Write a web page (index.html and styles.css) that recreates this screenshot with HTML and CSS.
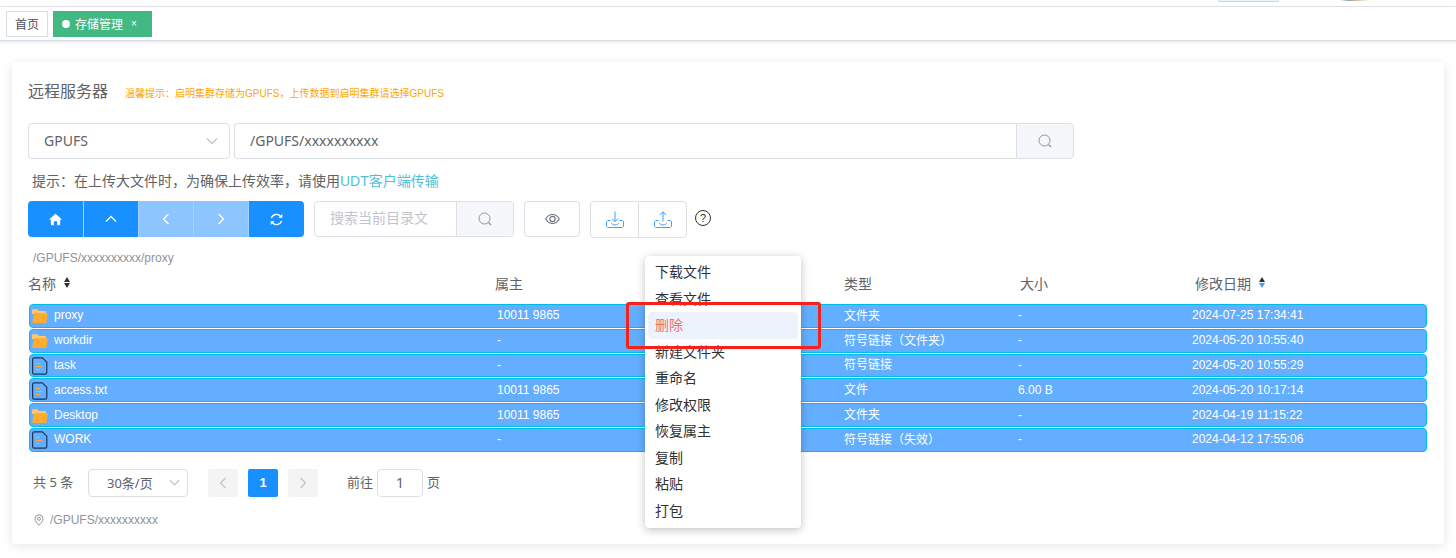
FILE: index.html
```html
<!DOCTYPE html>
<html lang="zh-CN">
<head>
<meta charset="utf-8">
<title>存储管理</title>
<link rel="stylesheet" href="styles.css">
</head>
<body>
<svg class="defs" width="0" height="0">
  <defs>
    <symbol id="folder" viewBox="0 0 16 16">
      <path fill="#ffc766" d="M0 2.2c0-.5.4-.9.9-.9h4.4l1.6 1.6h6.2c.5 0 .9.4.9.9V6H0z"/>
      <path fill="#ffab2e" d="M.2 14.6 1.9 6c.1-.5.4-.8.9-.8H15c.6 0 1 .5.9 1l-1.6 8c-.1.5-.5.8-1 .8H1c-.5 0-.9-.4-.8-.4z"/>
    </symbol>
    <symbol id="file" viewBox="0 0 16 18">
      <path fill="none" stroke="#1c3557" stroke-width="1.2" d="M2.2.8h8.2l4.4 4.4v10.4c0 .9-.7 1.6-1.6 1.6H2.2c-.9 0-1.6-.7-1.6-1.6V2.4C.6 1.500 1.300.8 2.200.8z"/>
      <path fill="none" stroke="#ffab2e" stroke-width="1.100" d="M4 6.500h4M4 9.500h6M4 12.500h4"/>
    </symbol>
    <symbol id="search" viewBox="0 0 14 14">
      <circle cx="6.500" cy="6.500" r="5.500" fill="none" stroke="currentColor" stroke-width="1"/>
      <path d="m10.500 10.500 2.500 2.500" fill="none" stroke="currentColor" stroke-width="1.200"/>
    </symbol>
    <symbol id="chev" viewBox="0 0 12 12">
      <path d="M1 8.500 6 3.500l5 5" fill="none" stroke="currentColor" stroke-width="1.300"/>
    </symbol>
    <symbol id="tray-down" viewBox="0 0 18 18">
      <path d="M9 .5v10M5.800 7.500 9 10.700l3.200-3.200" fill="none" stroke="currentColor" stroke-width="1"/>
      <path d="M4.500 9.500H2c-.8 0-1.500.7-1.500 1.500v4c0 .8.7 1.500 1.500 1.500h14c.8 0 1.500-.7 1.500-1.500v-4c0-.8-.7-1.500-1.500-1.500h-2.500M5 12.500c1 0 1.500 1.500 4 1.500s3-1.500 4-1.500" fill="none" stroke="currentColor" stroke-width="1"/>
    </symbol>
    <symbol id="tray-up" viewBox="0 0 18 18">
      <path d="M9 10.500V.8M5.800 4 9 .8 12.200 4" fill="none" stroke="currentColor" stroke-width="1"/>
      <path d="M4.500 9.500H2c-.8 0-1.500.7-1.500 1.500v4c0 .8.7 1.500 1.500 1.500h14c.8 0 1.500-.7 1.500-1.500v-4c0-.8-.7-1.500-1.500-1.500h-2.500M5 12.500c1 0 1.500 1.500 4 1.500s3-1.500 4-1.500" fill="none" stroke="currentColor" stroke-width="1"/>
    </symbol>
  </defs>
</svg>

<div class="topstrip">
  <span class="top-btn"></span>
  <span class="top-avatar"></span>
</div>

<nav class="tagsbar">
  <span class="tag">首页</span>
  <span class="tag tag-active"><i class="tag-dot"></i>存储管理<span class="tag-close">×</span></span>
</nav>

<main class="card">
  <div class="title-row">
    <span class="title">远程服务器</span>
    <span class="notice">温馨提示：启明集群存储为GPUFS，上传数据到启明集群请选择GPUFS</span>
  </div>

  <div class="path-row">
    <div class="select">GPUFS<svg class="sel-chev"><use href="#chev"/></svg></div>
    <div class="path-input">/GPUFS/xxxxxxxxxx</div>
    <div class="append"><svg class="ico-search"><use href="#search"/></svg></div>
  </div>

  <p class="tip">提示：在上传大文件时，为确保上传效率，请使用<span class="link">UDT客户端传输</span></p>

  <div class="toolbar">
    <div class="btn-group">
      <button class="nav-btn" type="button"><svg class="ico-home" viewBox="0 0 14 14"><path fill="#fff" d="M7 .8 13.400 6.400c.3.3.1.8-.3.8H12v5.300c0 .4-.3.700-.7.700H8.800V9.500c0-.3-.2-.5-.5-.5H5.700c-.3 0-.5.200-.5.500v3.700H2.700c-.4 0-.7-.3-.7-.7V7.200H.9c-.4 0-.6-.5-.3-.8z"/></svg></button>
      <button class="nav-btn" type="button"><svg class="ico-chev"><use href="#chev"/></svg></button>
      <button class="nav-btn nav-off" type="button"><svg class="ico-chev rot-left"><use href="#chev"/></svg></button>
      <button class="nav-btn nav-off" type="button"><svg class="ico-chev rot-right"><use href="#chev"/></svg></button>
      <button class="nav-btn" type="button"><svg class="ico-refresh" viewBox="0 0 14 14"><path d="M1.500 5.500A5.700 5.700 0 0 1 11.500 3.800M12.500 8.500A5.700 5.700 0 0 1 2.500 10.200" fill="none" stroke="#fff" stroke-width="1.500"/><path fill="#fff" d="M9 5.200h4.300V1zM5 8.800H.7V13z"/></svg></button>
    </div>
    <div class="search-box">
      <span class="search-ph">搜索当前目录文</span>
      <span class="search-btn"><svg class="ico-search"><use href="#search"/></svg></span>
    </div>
    <button class="eye-btn" type="button"><svg class="ico-eye" viewBox="0 0 16 12"><path d="M.8 6C2.500 2.800 5 1.200 8 1.200s5.500 1.600 7.200 4.800C13.500 9.200 11 10.800 8 10.800S2.500 9.200.8 6z" fill="none" stroke="#6b7280" stroke-width="1.200"/><circle cx="8" cy="6" r="2.800" fill="none" stroke="#6b7280" stroke-width="1.200"/></svg></button>
    <div class="transfer">
      <button class="tr-btn" type="button"><svg class="ico-tray"><use href="#tray-down"/></svg></button>
      <button class="tr-btn" type="button"><svg class="ico-tray"><use href="#tray-up"/></svg></button>
    </div>
    <span class="help">?</span>
  </div>

  <div class="crumb">/GPUFS/xxxxxxxxxx/proxy</div>

  <div class="thead">
    <span class="th-name">名称<span class="sort"><i class="up"></i><i class="down"></i></span></span>
    <span>属主</span>
    <span></span>
    <span>类型</span>
    <span>大小</span>
    <span class="th-date">修改日期<span class="sort"><i class="up"></i><i class="down on"></i></span></span>
  </div>

  <div class="tbody">
    <div class="row"><span class="name"><svg class="ic-folder"><use href="#folder"/></svg>proxy</span><span>10011 9865</span><span></span><span class="kind">文件夹</span><span>-</span><span>2024-07-25 17:34:41</span></div>
    <div class="row"><span class="name"><svg class="ic-folder"><use href="#folder"/></svg>workdir</span><span>-</span><span></span><span class="kind">符号链接（文件夹）</span><span>-</span><span>2024-05-20 10:55:40</span></div>
    <div class="row"><span class="name"><svg class="ic-file"><use href="#file"/></svg>task</span><span>-</span><span></span><span class="kind">符号链接</span><span>-</span><span>2024-05-20 10:55:29</span></div>
    <div class="row"><span class="name"><svg class="ic-file"><use href="#file"/></svg>access.txt</span><span>10011 9865</span><span></span><span class="kind">文件</span><span>6.00 B</span><span>2024-05-20 10:17:14</span></div>
    <div class="row"><span class="name"><svg class="ic-folder"><use href="#folder"/></svg>Desktop</span><span>10011 9865</span><span></span><span class="kind">文件夹</span><span>-</span><span>2024-04-19 11:15:22</span></div>
    <div class="row"><span class="name"><svg class="ic-file"><use href="#file"/></svg>WORK</span><span>-</span><span></span><span class="kind">符号链接（失效）</span><span>-</span><span>2024-04-12 17:55:06</span></div>
  </div>

  <div class="pager">
    <span class="total">共 5 条</span>
    <div class="page-size">30条/页<svg class="sel-chev small"><use href="#chev"/></svg></div>
    <span class="pg pg-off"><svg class="pg-chev rot-left"><use href="#chev"/></svg></span>
    <span class="pg pg-on">1</span>
    <span class="pg pg-off"><svg class="pg-chev rot-right"><use href="#chev"/></svg></span>
    <span class="goto">前往</span>
    <span class="goto-input">1</span>
    <span class="goto-end">页</span>
  </div>

  <div class="location">
    <svg class="ico-pin" viewBox="0 0 10 12"><path d="M5 11.300C2.600 8.800 1 6.800 1 4.800a4 4 0 0 1 8 0c0 2-1.600 4-4 6.500z" fill="none" stroke="#909399" stroke-width="1"/><circle cx="5" cy="4.800" r="1.500" fill="none" stroke="#909399" stroke-width="1"/></svg>
    <span>/GPUFS/xxxxxxxxxx</span>
  </div>
</main>

<ul class="menu">
  <li>下载文件</li>
  <li>查看文件</li>
  <li class="danger">删除</li>
  <li>新建文件夹</li>
  <li>重命名</li>
  <li>修改权限</li>
  <li>恢复属主</li>
  <li>复制</li>
  <li>粘贴</li>
  <li>打包</li>
</ul>
<div class="redbox"></div>
</body>
</html>
```

FILE: styles.css
```css
* { box-sizing: border-box; }
html, body { margin: 0; padding: 0; }
body {
  width: 1456px;
  height: 558px;
  overflow: hidden;
  position: relative;
  background: #fff;
  font-family: "Liberation Sans", "Noto Sans CJK SC", sans-serif;
  color: #606266;
}
.defs { position: absolute; }
svg { display: block; }

.topstrip {
  height: 7px;
  border-bottom: 1px solid #e4e6eb;
  display: flex;
  justify-content: flex-end;
  align-items: flex-start;
  padding-right: 86px;
}
.top-btn {
  width: 61px;
  height: 2px;
  border: 1px solid #b3d8ff;
  border-top: 0;
  border-radius: 0 0 3px 3px;
  background: #ecf5ff;
  margin-right: 61px;
}
.top-avatar {
  width: 30px;
  height: 1px;
  background: linear-gradient(90deg, #fff, #8aa79e 30%, #d9c7a8 60%, #fff);
}

.tagsbar {
  height: 34px;
  display: flex;
  gap: 5px;
  padding: 4px 0 0 6px;
  border-bottom: 1px solid #d8dce5;
  box-shadow: 0 1px 3px rgba(0, 21, 41, .12);
}
.tag {
  height: 26px;
  display: flex;
  align-items: center;
  padding: 0 8px 1px;
  font-size: 12px;
  color: #495060;
  background: #fff;
  border: 1px solid #d8dce5;
}
.tag-active {
  background: #42b983;
  border-color: #42b983;
  color: #fff;
  padding-right: 14px;
}
.tag-dot {
  width: 8px;
  height: 8px;
  border-radius: 50%;
  background: #fff;
  margin: 0 5px 0 0;
}
.tag-close { margin-left: 8px; font-size: 10px; }

.card {
  margin: 21px 12px 0;
  height: 482px;
  padding: 15px 16px 16px 16px;
  background: #fff;
  border-radius: 4px;
  box-shadow: 0 2px 12px rgba(0, 0, 0, .1);
}

.title-row { height: 26px; display: flex; align-items: center; }
.title { font-size: 16px; color: #606266; }
.notice { font-size: 10px; color: #ffa500; margin-left: 17px; padding-top: 4px; }

.path-row {
  margin-top: 20px;
  display: flex;
  height: 36px;
  font-family: "Noto Sans", "Noto Sans CJK SC", sans-serif;
  font-size: 14px;
}
.select {
  width: 202px;
  border: 1px solid #dcdfe6;
  border-radius: 4px;
  padding-left: 15px;
  line-height: 34px;
  position: relative;
  display: flex;
  justify-content: space-between;
  align-items: center;
}
.sel-chev {
  width: 12px;
  height: 12px;
  margin-right: 11px;
  color: #c0c4cc;
  transform: rotate(180deg);
}
.sel-chev.small { width: 11px; height: 11px; margin-right: 0; }
.path-input {
  margin-left: 4px;
  width: 782px;
  border: 1px solid #dcdfe6;
  border-right: 0;
  border-radius: 4px 0 0 4px;
  padding-left: 15px;
  line-height: 34px;
}
.append {
  width: 58px;
  background: #f5f7fa;
  border: 1px solid #dcdfe6;
  border-radius: 0 4px 4px 0;
  display: flex;
  align-items: center;
  justify-content: center;
  color: #909399;
}
.ico-search { width: 14px; height: 14px; }

.tip {
  margin: 12px 0 0;
  height: 20px;
  line-height: 20px;
  padding-left: 4px;
  font-size: 14px;
  color: #606266;
}
.link { color: #4fc1d6; }

.toolbar { margin-top: 10px; display: flex; align-items: flex-start; height: 37px; }
.btn-group {
  width: 276px;
  height: 36px;
  display: flex;
  border-radius: 4px;
  overflow: hidden;
}
.nav-btn {
  flex: none;
  width: 55px;
  padding: 0;
  border: 0;
  border-right: 1px solid #a6d2ff;
  background: #1890ff;
  color: #fff;
  display: flex;
  align-items: center;
  justify-content: center;
}
.nav-btn:first-child { width: 56px; }
.nav-btn:last-child { border-right: 0; }
.nav-off { background: #8cc5ff; }
.ico-home { width: 13px; height: 13px; }
.ico-chev { width: 12px; height: 12px; }
.rot-left { transform: rotate(-90deg); }
.rot-right { transform: rotate(90deg); }
.ico-refresh { width: 13px; height: 13px; }

.search-box {
  margin-left: 10px;
  width: 200px;
  height: 36px;
  display: flex;
  border: 1px solid #dcdfe6;
  border-radius: 4px;
  font-size: 14px;
}
.search-ph { width: 141px; padding-left: 15px; line-height: 33px; color: #c0c4cc; white-space: nowrap; overflow: hidden; }
.search-btn {
  flex: 1;
  background: #f5f7fa;
  border-left: 1px solid #dcdfe6;
  border-radius: 0 4px 4px 0;
  display: flex;
  align-items: center;
  justify-content: center;
  color: #909399;
}
.eye-btn {
  margin-left: 10px;
  width: 56px;
  height: 36px;
  padding: 0;
  background: #fff;
  border: 1px solid #dcdfe6;
  border-radius: 4px;
  display: flex;
  align-items: center;
  justify-content: center;
}
.ico-eye { width: 15px; height: 12px; }
.transfer {
  margin-left: 10px;
  width: 97px;
  height: 37px;
  display: flex;
  border: 1px solid #dcdfe6;
  border-radius: 4px;
}
.tr-btn {
  flex: 1;
  padding: 0;
  background: transparent;
  border: 0;
  display: flex;
  align-items: center;
  justify-content: center;
  color: #409eff;
}
.tr-btn + .tr-btn { border-left: 1px solid #dcdfe6; }
.ico-tray { width: 18px; height: 18px; }
.help {
  margin: 9px 0 0 8px;
  width: 16px;
  height: 16px;
  border: 1px solid #303133;
  border-radius: 50%;
  font-size: 11px;
  line-height: 14px;
  text-align: center;
  color: #303133;
}

.crumb {
  margin-top: 11px;
  height: 18px;
  line-height: 18px;
  padding-left: 5px;
  font-size: 12px;
  color: #909399;
}

.thead {
  margin-top: 5px;
  height: 23px;
  padding-bottom: 2px;
  display: grid;
  grid-template-columns: 467px 349px 0 176px 175px 1fr;
  align-items: center;
  font-size: 14px;
  color: #606266;
  white-space: nowrap;
}
.th-name, .th-date { display: flex; align-items: center; }
.sort { display: inline-flex; flex-direction: column; gap: 1px; margin-left: 8px; }
.sort i { display: block; width: 0; height: 0; border-left: 3.5px solid transparent; border-right: 3.5px solid transparent; }
.sort .up { border-bottom: 5px solid #303133; }
.sort .down { border-top: 5px solid #303133; }
.sort .down.on { border-top-color: #409eff; }

.tbody { margin: 9px 0 0 1px; width: 1398px; }
.row {
  height: 23.8px;
  margin-bottom: 1px;
  display: grid;
  grid-template-columns: 466px 347px 0 174px 174px 1fr;
  align-items: center;
  padding: 0 0 1px 1px;
  background: #64aeff;
  border: 1px solid #00bde6;
  border-radius: 4px;
  color: #fff;
  font-size: 12px;
  white-space: nowrap;
}
.kind { margin-top: -2px; }
.name { display: flex; align-items: center; }
.ic-folder { width: 16px; height: 16px; margin: 2px 6px 0 1px; flex: none; }
.ic-file { width: 16px; height: 18px; margin: 2px 6px 0 1px; flex: none; }

.pager {
  margin-top: 17.200px;
  height: 28px;
  display: flex;
  align-items: center;
  padding-left: 5px;
  font-family: "Noto Sans", "Noto Sans CJK SC", sans-serif;
  font-size: 13px;
}
.total { width: 55px; white-space: nowrap; margin-top: -2px; }
.page-size {
  width: 100px;
  height: 28px;
  border: 1px solid #dcdfe6;
  border-radius: 4px;
  padding: 0 7px 1px 18px;
  display: flex;
  align-items: center;
  justify-content: space-between;
}
.pg {
  width: 30px;
  height: 28px;
  margin-right: 10px;
  border-radius: 2px;
  display: flex;
  align-items: center;
  justify-content: center;
  font-family: "Liberation Sans", sans-serif;
  font-weight: 700;
}
.page-size + .pg { margin-left: 20px; }
.pg-off { background: #f4f4f5; color: #c0c4cc; }
.pg-on { background: #1890ff; color: #fff; }
.pg-chev { width: 12px; height: 12px; }
.goto { margin-left: 19px; width: 30px; white-space: nowrap; margin-top: -2px; }
.goto-input {
  width: 46px;
  height: 28px;
  border: 1px solid #dcdfe6;
  border-radius: 4px;
  text-align: center;
  line-height: 25px;
  font-size: 14px;
}
.goto-end { margin-left: 4px; margin-top: -2px; }

.location {
  margin-top: 15px;
  height: 16px;
  display: flex;
  align-items: center;
  padding-left: 6px;
  font-size: 12px;
  color: #909399;
}
.ico-pin { width: 10px; height: 12px; margin-right: 6px; }

.menu {
  position: absolute;
  left: 645px;
  top: 256px;
  width: 156px;
  height: 272px;
  margin: 0;
  padding: 3px;
  list-style: none;
  background: #fff;
  border-radius: 4px;
  box-shadow: 0 2px 8px rgba(0, 0, 0, .25);
  font-size: 14px;
  color: #303133;
}
.menu li {
  height: 26.55px;
  line-height: 26.55px;
  padding-left: 7px;
  border-radius: 4px;
}
.menu .danger { background: #edf3fd; color: #f56c6c; }
.redbox {
  position: absolute;
  left: 626px;
  top: 302px;
  width: 195px;
  height: 47px;
  border: 3px solid #f5221b;
  border-radius: 3px;
}
```
